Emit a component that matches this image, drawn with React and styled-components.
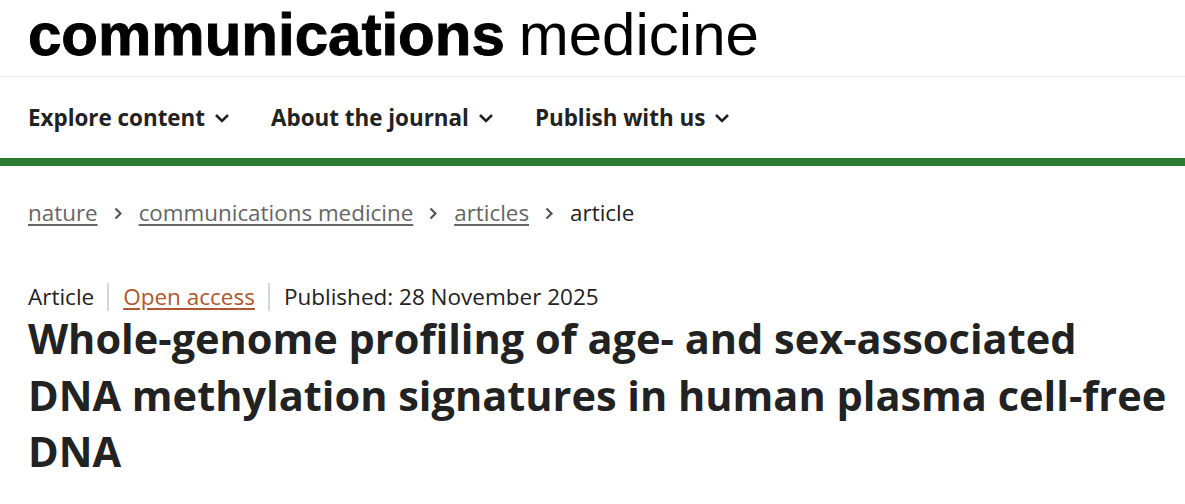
import React from 'react';
import styled, { createGlobalStyle } from 'styled-components';

const GlobalStyle = createGlobalStyle`
  html, body {
    margin: 0;
    padding: 0;
    background: #fff;
  }
  body {
    font-family: "Open Sans", "Noto Sans", sans-serif;
    color: #222;
  }
`;

const Header = styled.header`
  height: 76px;
  padding: 0 28px;
  display: flex;
  align-items: flex-end;
  border-bottom: 1px solid #ececec;
`;

const Logo = styled.a`
  font-family: "Liberation Sans", Arial, sans-serif;
  font-size: 60px;
  line-height: 1;
  color: #000;
  text-decoration: none;
  padding-bottom: 11px;
  white-space: nowrap;
`;

const LogoBold = styled.span`
  font-weight: 700;
  -webkit-text-stroke: 0.9px #000;
`;

const LogoLight = styled.span`
  font-weight: 400;
  margin-left: 14px;
`;

const Nav = styled.nav`
  height: 81px;
  padding: 0 28px;
  display: flex;
  align-items: center;
  gap: 41px;
  border-bottom: 8px solid #2a7a2f;
`;

const NavItem = styled.button`
  display: flex;
  align-items: center;
  gap: 9px;
  padding: 0;
  border: 0;
  background: none;
  font-family: "Open Sans", sans-serif;
  font-size: 22.4px;
  font-weight: 700;
  color: #222;
  cursor: pointer;
`;

const Breadcrumbs = styled.ol`
  list-style: none;
  margin: 0;
  padding: 33px 28px 0;
  display: flex;
  align-items: center;
  font-size: 22.4px;
  line-height: 28px;
`;

const Crumb = styled.li`
  display: flex;
  align-items: center;
`;

const CrumbLink = styled.a`
  color: #666;
  text-decoration: underline;
  text-underline-offset: 3px;
`;

const CrumbSep = styled.span`
  display: inline-flex;
  margin: 0 17px 0 16px;
`;

const Current = styled.span`
  color: #222;
`;

const Meta = styled.ul`
  list-style: none;
  margin: 0;
  padding: 56px 28px 0;
  display: flex;
  align-items: center;
  font-size: 22.5px;
  line-height: 22px;
`;

const MetaItem = styled.li`
  padding: 3px 13px 3px 14px;
  border-left: 2px solid #d5d8da;
  &:first-child {
    padding-left: 0;
    border-left: 0;
  }
`;

const Access = styled.a`
  color: #b0552c;
  text-decoration: underline;
  text-underline-offset: 3px;
`;

const Title = styled.h1`
  margin: -1px 0 0;
  padding: 0 14px 0 28px;
  font-size: 41.5px;
  line-height: 56.5px;
  font-weight: 700;
  color: #222;
`;

const ChevronDown = () => (
  <svg width="16" height="10" viewBox="0 0 16 10" fill="none">
    <polyline points="2,2 8,8 14,2" stroke="#222" strokeWidth="2.6" />
  </svg>
);

const ChevronRight = () => (
  <svg width="8" height="13" viewBox="0 0 8 13" fill="none">
    <polyline points="1.5,1.5 6.5,6.5 1.5,11.5" stroke="#555" strokeWidth="2.2" />
  </svg>
);

export default function App() {
  const crumbs = ['nature', 'communications medicine', 'articles'];
  return (
    <>
      <GlobalStyle />
      <Header>
        <Logo href="#">
          <LogoBold>communications</LogoBold>
          <LogoLight>medicine</LogoLight>
        </Logo>
      </Header>
      <Nav>
        <NavItem>
          Explore content <ChevronDown />
        </NavItem>
        <NavItem>
          About the journal <ChevronDown />
        </NavItem>
        <NavItem>
          Publish with us <ChevronDown />
        </NavItem>
      </Nav>
      <Breadcrumbs>
        {crumbs.map((c) => (
          <Crumb key={c}>
            <CrumbLink href="#">{c}</CrumbLink>
            <CrumbSep>
              <ChevronRight />
            </CrumbSep>
          </Crumb>
        ))}
        <Crumb>
          <Current>article</Current>
        </Crumb>
      </Breadcrumbs>
      <Meta>
        <MetaItem>Article</MetaItem>
        <MetaItem>
          <Access href="#">Open access</Access>
        </MetaItem>
        <MetaItem>Published: 28 November 2025</MetaItem>
      </Meta>
      <Title>
        Whole-genome profiling of age- and sex-associated DNA methylation
        signatures in human plasma cell-free DNA
      </Title>
    </>
  );
}
